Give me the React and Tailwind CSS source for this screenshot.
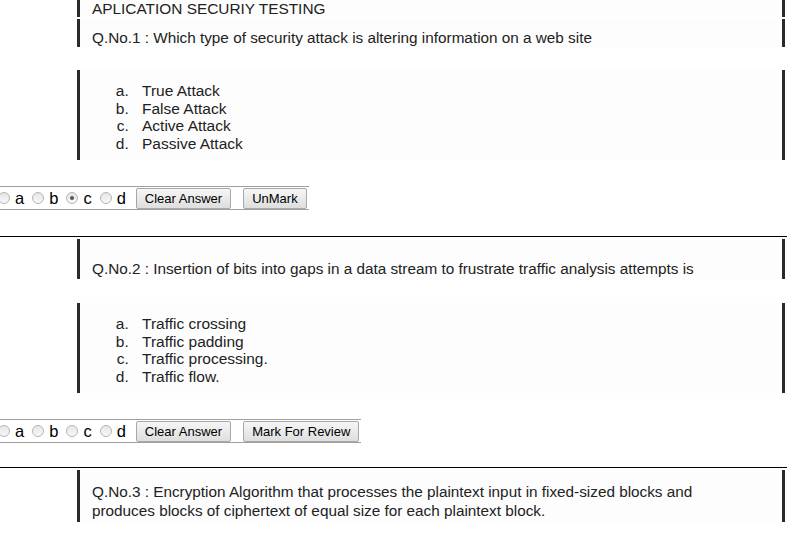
import React from 'react';

const questions = [
  {
    no: 1,
    text: 'Which type of security attack is altering information on a web site',
    options: ['True Attack', 'False Attack', 'Active Attack', 'Passive Attack'],
    checked: 'c',
    mark: 'UnMark',
  },
  {
    no: 2,
    text: 'Insertion of bits into gaps in a data stream to frustrate traffic analysis attempts is',
    options: ['Traffic crossing', 'Traffic padding', 'Traffic processing.', 'Traffic flow.'],
    checked: null,
    mark: 'Mark For Review',
  },
];

const Radio = ({ on }) => (
  <span className="inline-block w-[12px] h-[12px] rounded-full border border-[#b5b5b5] bg-gradient-to-b from-[#e6e6e6] to-[#f8f8f8] relative">
    {on && <span className="absolute left-[3px] top-[3px] w-[4px] h-[4px] rounded-full bg-[#555]" />}
  </span>
);

const Btn = ({ children }) => (
  <button className="h-[21px] px-[8px] border border-[#a8a8a8] rounded-[2px] bg-gradient-to-b from-[#f6f6f6] to-[#dedede] text-[13px] leading-none text-black">
    {children}
  </button>
);

const AnswerBar = ({ checked, mark }) => (
  <div className="-ml-[2px] inline-flex items-center h-[24px] border-y border-[#a0a0a0] pr-[2px]">
    {['a', 'b', 'c', 'd'].map((l) => (
      <span key={l} className="flex items-center gap-[5px] mr-[8px] text-[16.5px] text-black">
        <Radio on={checked === l} />
        {l}
      </span>
    ))}
    <span className="ml-[2px] flex gap-[12px]">
      <Btn>Clear Answer</Btn>
      <Btn>{mark}</Btn>
    </span>
  </div>
);

const Box = ({ className, children }) => (
  <div className={`ml-[77px] mr-[2px] border-l-[3px] border-r-[3px] border-[#2a2a2a] bg-[#fdfdfd] ${className}`}>
    {children}
  </div>
);

const Options = ({ items }) => (
  <Box className="h-[90px] pt-[12px]">
    <ol className="list-[lower-alpha] pl-[53px] text-[15.5px] leading-[17.7px] text-[#222]">
      {items.map((o) => (
        <li key={o} className="pl-[9px]">{o}</li>
      ))}
    </ol>
  </Box>
);

export default function App() {
  return (
    <div className="w-[787px] h-[535px] overflow-hidden bg-white font-['Liberation_Sans',Arial,sans-serif] text-[#222]">
      <Box className="h-[17px] flex items-center pl-[12px] text-[15.4px] leading-none">APLICATION SECURIY TESTING</Box>
      <div className="h-[2px]" />
      <Box className="h-[28px] pl-[12px] pt-[10px] text-[15.3px] leading-[18px]">Q.No.1 : {questions[0].text}</Box>
      <div className="h-[23px]" />
      <Options items={questions[0].options} />
      <div className="h-[26px]" />
      <AnswerBar checked="c" mark="UnMark" />
      <div className="h-[25px]" />
      <hr className="border-t border-black" />
      <div className="h-[2px]" />
      <Box className="h-[40px] pl-[12px] pt-[21px] text-[15.3px] leading-[18px]">Q.No.2 : {questions[1].text}</Box>
      <div className="h-[24px]" />
      <Options items={questions[1].options} />
      <div className="h-[26px]" />
      <AnswerBar checked={null} mark="Mark For Review" />
      <div className="h-[23px]" />
      <hr className="border-t border-black" />
      <div className="h-[2px]" />
      <Box className="h-[52px] pl-[12px] pt-[12px] text-[15.3px] leading-[19px]">
        Q.No.3 : Encryption Algorithm that processes the plaintext input in fixed-sized blocks and
        <br />
        produces blocks of ciphertext of equal size for each plaintext block.
      </Box>
    </div>
  );
}
